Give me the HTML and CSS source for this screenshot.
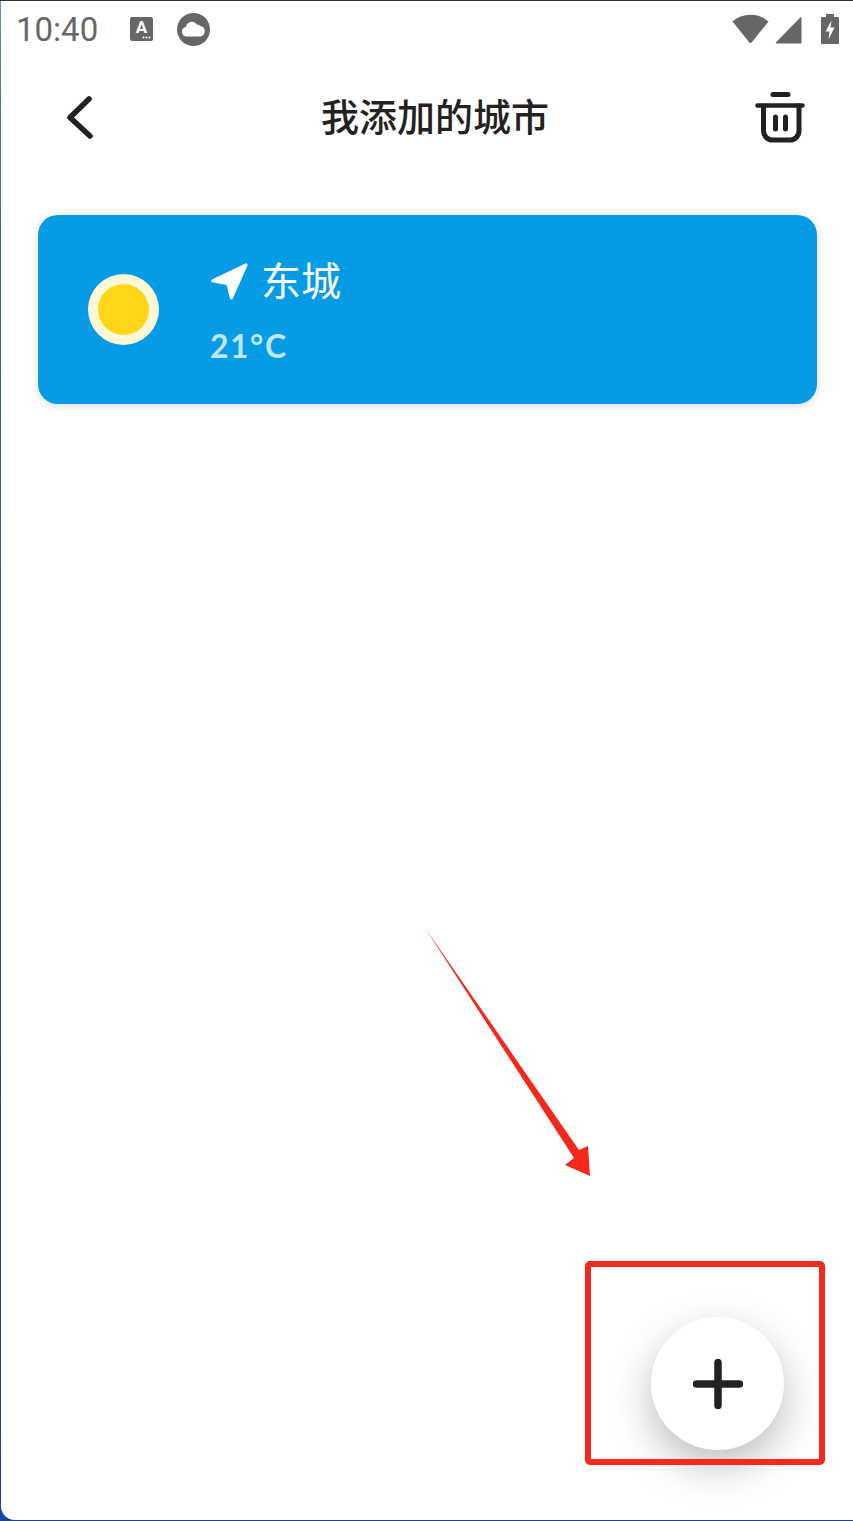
FILE: index.html
```html
<!DOCTYPE html>
<html lang="zh">

<head>
    <meta charset="utf-8"/>
    <meta name="viewport" content="width=device-width, initial-scale=1.0">
    <title>我添加的城市</title>
    <link rel="stylesheet" href="styles.css">
</head>
<body>
    <div class="screen">
        <div class="status-bar">
            <span class="status-time">10:40</span>
            <svg class="status-ime" viewBox="0 0 23 24">
                <rect width="23" height="24" rx="2" fill="#666"/>
                <text x="11.5" y="15.5" text-anchor="middle" class="ime-letter">A</text>
                <circle cx="13.5" cy="20.5" r="1" fill="#fff"/>
                <circle cx="16.5" cy="20.5" r="1" fill="#fff"/>
                <circle cx="19.5" cy="20.5" r="1" fill="#fff"/>
            </svg>
            <svg class="status-cloud" viewBox="0 0 33 33">
                <circle cx="16.500" cy="16.500" r="16.500" fill="#666"/>
                <path d="M9.500 23.500a4.800 4.800 0 0 1-.6-9.500 6 6 0 0 1 11-2.500 5.500 5.500 0 0 1 3.600 1.400 5.400 5.400 0 0 1-.2 10.600z" fill="#fff"/>
            </svg>
            <div class="status-right">
                <svg class="status-wifi" viewBox="0 0 37 30">
                    <path d="M.5 7.500C5.500 3 11.500.8 18.500.8S31.500 3 36.500 7.500L20 28a2 2 0 0 1-3 0z" fill="#666"/>
                </svg>
                <svg class="status-signal" viewBox="0 0 27 27">
                    <path d="M26.500 .5V26.500H1.500a.8.8 0 0 1-.5-1.300L25.500.2a.6.6 0 0 1 1 .3z" fill="#666"/>
                </svg>
                <svg class="status-battery" viewBox="0 0 18 30">
                    <path d="M5 0H13V3H17a1 1 0 0 1 1 1V29a1 1 0 0 1-1 1H1a1 1 0 0 1-1-1V4a1 1 0 0 1 1-1H5z" fill="#666"/>
                    <path d="M10.500 6.500L4.500 17.500H8.500L7.500 25.500L13.500 13.500H9.500z" fill="#fff"/>
                </svg>
            </div>
        </div>

        <div class="top-bar">
            <svg class="back-icon" viewBox="0 0 32 50">
                <path d="M24 7L5 25.500L25 44" fill="none" stroke="#222" stroke-width="5.500" stroke-linecap="round" stroke-linejoin="round"/>
            </svg>
            <h1 class="page-title">我添加的城市</h1>
            <svg class="trash-icon" viewBox="0 0 50 52">
                <g fill="none" stroke="#222" stroke-linecap="round" stroke-linejoin="round">
                    <path d="M18 3.500H33" stroke-width="5"/>
                    <path d="M2.500 14.500H47.500" stroke-width="4.500"/>
                    <path d="M8.500 15V40a9 9 0 0 0 9 9H35a9 9 0 0 0 9-9V15" stroke-width="5"/>
                    <path d="M20.500 26V38M30.500 26V38" stroke-width="5"/>
                </g>
            </svg>
        </div>

        <div class="city-list">
            <div class="city-card">
                <div class="sun"><div class="sun-core"></div></div>
                <div class="city-info">
                    <div class="city-name">
                        <svg class="locate-icon" viewBox="0 0 38 38">
                            <path d="M35.500 1.500L2 17.500c-1.500.8-1.200 2.500.3 2.800L16.500 23l3.500 13.500c.4 1.400 2.100 1.500 2.700.2L37.500 3.500c.5-1.400-.7-2.600-2-2z" fill="#fff"/>
                        </svg>
                        <span>东城</span>
                    </div>
                    <div class="city-temp">21°C</div>
                </div>
            </div>
        </div>

        <button type="button" class="add-btn">
            <svg class="add-icon" viewBox="0 0 50 50">
                <path d="M25 3.500V46.500M3.500 25H46.500" fill="none" stroke="#222" stroke-width="7.500" stroke-linecap="round"/>
            </svg>
        </button>
    </div>

    <svg class="mark-arrow" viewBox="0 0 853 1521">
        <path d="M425 928L579 1150L588 1146L590 1176L565 1165L574 1158z" fill="#f5281c"/>
    </svg>
    <div class="mark-box"></div>
</body>
</html>
```

FILE: styles.css
```css
html, body {
    margin: 0;
    padding: 0;
}
body {
    position: relative;
    width: 853px;
    height: 1521px;
    overflow: hidden;
    box-sizing: border-box;
    padding: 0 0 1px 1px;
    border-top: 1px solid #2c2f35;
    background: linear-gradient(to bottom, #6a8fa5 0, #3f6f9a 10%, #1f4f9f 55%, #1746a8 100%);
    font-family: "Noto Sans CJK SC", "Noto Sans", sans-serif;
}
.screen {
    position: relative;
    height: 100%;
    background: #fff;
    border-bottom-left-radius: 14px;
}
.status-bar {
    display: flex;
    align-items: center;
    height: 56px;
    padding: 0 14px 0 15px;
}
.status-time {
    font-family: Roboto, sans-serif;
    font-size: 33px;
    font-weight: 450;
    color: #666;
    width: 114px;
}
.status-ime {
    width: 23px;
    height: 24px;
}
.ime-letter {
    font-family: Roboto, sans-serif;
    font-size: 17px;
    font-weight: 700;
    fill: #fff;
}
.status-cloud {
    width: 33px;
    height: 33px;
    margin-left: 24px;
}
.status-right {
    display: flex;
    align-items: flex-end;
    margin-left: auto;
    height: 30px;
}
.status-wifi {
    width: 37px;
    height: 30px;
}
.status-signal {
    width: 27px;
    height: 27px;
    margin-left: 6px;
}
.status-battery {
    width: 18px;
    height: 30px;
    margin-left: 19px;
}
.top-bar {
    display: flex;
    align-items: center;
    justify-content: space-between;
    height: 120px;
    padding: 0 48px 0 64px;
}
.back-icon {
    width: 32px;
    height: 50px;
}
.page-title {
    margin: 0 0 5px 18px;
    font-size: 38px;
    font-weight: 500;
    color: #222;
}
.trash-icon {
    width: 50px;
    height: 52px;
}
.city-list {
    padding: 38px 36px 0 37px;
}
.city-card {
    display: flex;
    align-items: center;
    height: 189px;
    padding-left: 50px;
    background: #059be5;
    border-radius: 20px;
    box-shadow: 0 2px 8px rgba(0,0,0,0.15);
}
.sun {
    display: flex;
    align-items: center;
    justify-content: center;
    width: 71px;
    height: 71px;
    border-radius: 50%;
    background: #fff9d6;
}
.sun-core {
    width: 51px;
    height: 51px;
    border-radius: 50%;
    background: #ffd61a;
}
.city-info {
    margin-left: 52px;
}
.city-name {
    display: flex;
    align-items: center;
    gap: 13px;
    margin-left: -1px;
    font-size: 40px;
    line-height: 56px;
    color: #fff;
    font-weight: 400;
}
.locate-icon {
    width: 38px;
    height: 38px;
    margin-top: 3px;
}
.city-temp {
    margin-top: 19px;
    margin-bottom: 2px;
    margin-left: -1px;
    font-family: Lato, sans-serif;
    font-size: 32px;
    font-weight: 700;
    letter-spacing: 1.5px;
    line-height: 40px;
    color: #bfe6fb;
}
.add-btn {
    position: absolute;
    right: 69px;
    bottom: 70px;
    display: flex;
    align-items: center;
    justify-content: center;
    width: 133px;
    height: 133px;
    padding: 0;
    border: none;
    border-radius: 50%;
    background: #fff;
    box-shadow: 0 16px 40px rgba(0,0,0,0.26);
}
.add-icon {
    width: 50px;
    height: 50px;
}
.mark-arrow {
    position: absolute;
    left: 0;
    top: -1px;
    width: 853px;
    height: 1521px;
}
.mark-box {
    position: absolute;
    left: 585px;
    top: 1260px;
    width: 240px;
    height: 204px;
    box-sizing: border-box;
    border: 6px solid #f5281c;
    border-radius: 5px;
}
```
